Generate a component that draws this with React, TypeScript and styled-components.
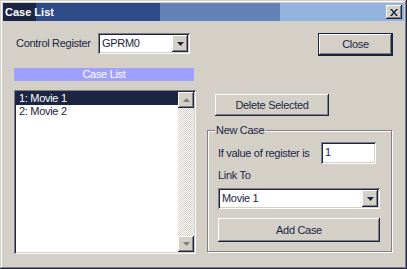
import React from 'react'
import styled, { createGlobalStyle } from 'styled-components'

const ink = '#1b2442'
const face = '#d4d0c8'
const shade = '#808080'

const GlobalStyle = createGlobalStyle`
  html, body {
    margin: 0;
    padding: 0;
    background: ${face};
  }
  * {
    box-sizing: border-box;
  }
`

const raised = `
  box-shadow: inset -1px -1px ${ink}, inset 1px 1px #fff, inset -2px -2px ${shade}, inset 2px 2px ${face};
`

const sunken = `
  box-shadow: inset 1px 1px ${shade}, inset -1px -1px #fff, inset 2px 2px ${ink}, inset -2px -2px ${face};
`

const Window = styled.div`
  width: 407px;
  height: 269px;
  padding: 3px;
  background: ${face};
  box-shadow: inset -1px -1px ${ink}, inset 1px 1px ${face}, inset -2px -2px ${shade}, inset 2px 2px #fff;
  font-family: 'Liberation Sans', Arial, sans-serif;
  font-size: 11px;
  letter-spacing: -0.3px;
  color: ${ink};
  display: flex;
  flex-direction: column;
`

const TitleBar = styled.div`
  height: 18px;
  display: flex;
  align-items: center;
  justify-content: space-between;
  padding: 0 2px;
  background: linear-gradient(
    to right,
    ${ink} 0 33px,
    #2e4a87 33px 157px,
    #6282b8 157px 277px,
    #92b4de 277px
  );
`

const TitleText = styled.span`
  color: #fff;
  font-weight: bold;
  font-size: 11px;
  letter-spacing: 0;
  line-height: 18px;
`

const CaptionButton = styled.div`
  width: 16px;
  height: 14px;
  background: ${face};
  ${raised}
  display: flex;
  align-items: center;
  justify-content: center;
`

const Body = styled.div`
  display: flex;
  padding: 12px 0 0 11px;
`

const LeftColumn = styled.div`
  width: 182px;
  display: flex;
  flex-direction: column;
`

const RightColumn = styled.div`
  width: 186px;
  margin-left: 11px;
  display: flex;
  flex-direction: column;
`

const FieldRow = styled.div`
  display: flex;
  align-items: center;
  height: 21px;
`

const Label = styled.span<{ $width?: number; $indent?: number }>`
  width: ${(p) => (p.$width ? `${p.$width}px` : 'auto')};
  padding-left: ${(p) => p.$indent ?? 2}px;
  line-height: 13px;
  white-space: nowrap;
`

const ComboBox = styled.div<{ $width: number }>`
  width: ${(p) => p.$width}px;
  height: 21px;
  padding: 2px;
  background: #fff;
  ${sunken}
  display: flex;
  align-items: stretch;
`

const ComboText = styled.span`
  flex: 1;
  padding-left: 2px;
  line-height: 17px;
`

const DropButton = styled.div`
  width: 16px;
  background: ${face};
  ${raised}
  display: flex;
  align-items: center;
  justify-content: center;
`

const HeaderBar = styled.div`
  margin-top: 14px;
  width: 180px;
  height: 13px;
  line-height: 13px;
  background: #a0a0ff;
  color: #fff;
  text-align: center;
`

const ListBox = styled.div`
  margin-top: 9px;
  width: 182px;
  height: 164px;
  padding: 2px;
  background: #fff;
  ${sunken}
  display: flex;
`

const ListItems = styled.div`
  flex: 1;
  display: flex;
  flex-direction: column;
`

const ListItem = styled.div<{ $selected?: boolean }>`
  height: 13px;
  line-height: 13px;
  padding-left: 3px;
  background: ${(p) => (p.$selected ? ink : 'transparent')};
  color: ${(p) => (p.$selected ? '#fff' : ink)};
`

const ScrollBar = styled.div`
  width: 16px;
  display: flex;
  flex-direction: column;
  justify-content: space-between;
  background: repeating-conic-gradient(#fff 0 25%, ${face} 0 50%) 0 0 / 2px 2px;
`

const ScrollButton = styled.div`
  width: 16px;
  height: 16px;
  background: ${face};
  ${raised}
  display: flex;
  align-items: center;
  justify-content: center;
`

const Button = styled.div<{ $width: number; $height: number; $default?: boolean }>`
  width: ${(p) => p.$width}px;
  height: ${(p) => p.$height}px;
  background: ${face};
  display: flex;
  align-items: center;
  justify-content: center;
  line-height: 13px;
  ${(p) =>
    p.$default
      ? `box-shadow: inset 0 0 0 1px ${ink}, inset -2px -2px ${ink}, inset 2px 2px #fff, inset -3px -3px ${shade};`
      : raised}
`

const CloseButton = styled(Button)`
  align-self: flex-end;
`

const DeleteButton = styled(Button)`
  margin-top: 38px;
  margin-left: 8px;
`

const GroupBox = styled.div`
  position: relative;
  margin-top: 14px;
  width: 185px;
  height: 122px;
  border: 1px solid ${shade};
  box-shadow: 1px 1px 0 #fff, inset 1px 1px 0 #fff;
  padding: 11px 0 0 10px;
  display: flex;
  flex-direction: column;
`

const Legend = styled.span`
  position: absolute;
  top: -7px;
  left: 7px;
  padding: 0 2px 0 1px;
  background: ${face};
  line-height: 13px;
`

const ValueRow = styled.div`
  display: flex;
  align-items: center;
  height: 22px;
`

const TextInput = styled.div`
  width: 55px;
  height: 22px;
  padding: 2px 4px;
  background: #fff;
  ${sunken}
  line-height: 16px;
`

const LinkLabel = styled.div`
  margin-top: 5px;
  height: 13px;
  line-height: 13px;
`

const GroupCombo = styled(ComboBox)`
  margin-top: 6px;
`

const AddButton = styled(Button)`
  margin-top: 9px;
`

const DownArrow = ({ color = ink }: { color?: string }) => (
  <svg width="7" height="4" viewBox="0 0 7 4">
    <path d="M0 0h7L3.5 4z" fill={color} />
  </svg>
)

const UpArrow = ({ color = shade }: { color?: string }) => (
  <svg width="7" height="4" viewBox="0 0 7 4">
    <path d="M0 4h7L3.5 0z" fill={color} />
  </svg>
)

const CloseGlyph = () => (
  <svg width="8" height="7" viewBox="0 0 8 7">
    <path d="M0 0h2l2 2.5L6 0h2L5 3.5 8 7H6L4 4.5 2 7H0l3-3.5z" fill={ink} />
  </svg>
)

const items = ['1: Movie 1', '2: Movie 2']

export default function App() {
  return (
    <>
      <GlobalStyle />
      <Window>
        <TitleBar>
          <TitleText>Case List</TitleText>
          <CaptionButton>
            <CloseGlyph />
          </CaptionButton>
        </TitleBar>
        <Body>
          <LeftColumn>
            <FieldRow>
              <Label $width={84}>Control Register</Label>
              <ComboBox $width={92}>
                <ComboText>GPRM0</ComboText>
                <DropButton>
                  <DownArrow />
                </DropButton>
              </ComboBox>
            </FieldRow>
            <HeaderBar>Case List</HeaderBar>
            <ListBox>
              <ListItems>
                {items.map((item, i) => (
                  <ListItem key={item} $selected={i === 0}>
                    {item}
                  </ListItem>
                ))}
              </ListItems>
              <ScrollBar>
                <ScrollButton>
                  <UpArrow />
                </ScrollButton>
                <ScrollButton>
                  <DownArrow color={shade} />
                </ScrollButton>
              </ScrollBar>
            </ListBox>
          </LeftColumn>
          <RightColumn>
            <CloseButton $width={75} $height={23} $default>
              Close
            </CloseButton>
            <DeleteButton $width={114} $height={22}>
              Delete Selected
            </DeleteButton>
            <GroupBox>
              <Legend>New Case</Legend>
              <ValueRow>
                <Label $width={103} $indent={0}>
                  If value of register is
                </Label>
                <TextInput>1</TextInput>
              </ValueRow>
              <LinkLabel>Link To</LinkLabel>
              <GroupCombo $width={162}>
                <ComboText>Movie 1</ComboText>
                <DropButton>
                  <DownArrow />
                </DropButton>
              </GroupCombo>
              <AddButton $width={162} $height={24}>
                Add Case
              </AddButton>
            </GroupBox>
          </RightColumn>
        </Body>
      </Window>
    </>
  )
}
